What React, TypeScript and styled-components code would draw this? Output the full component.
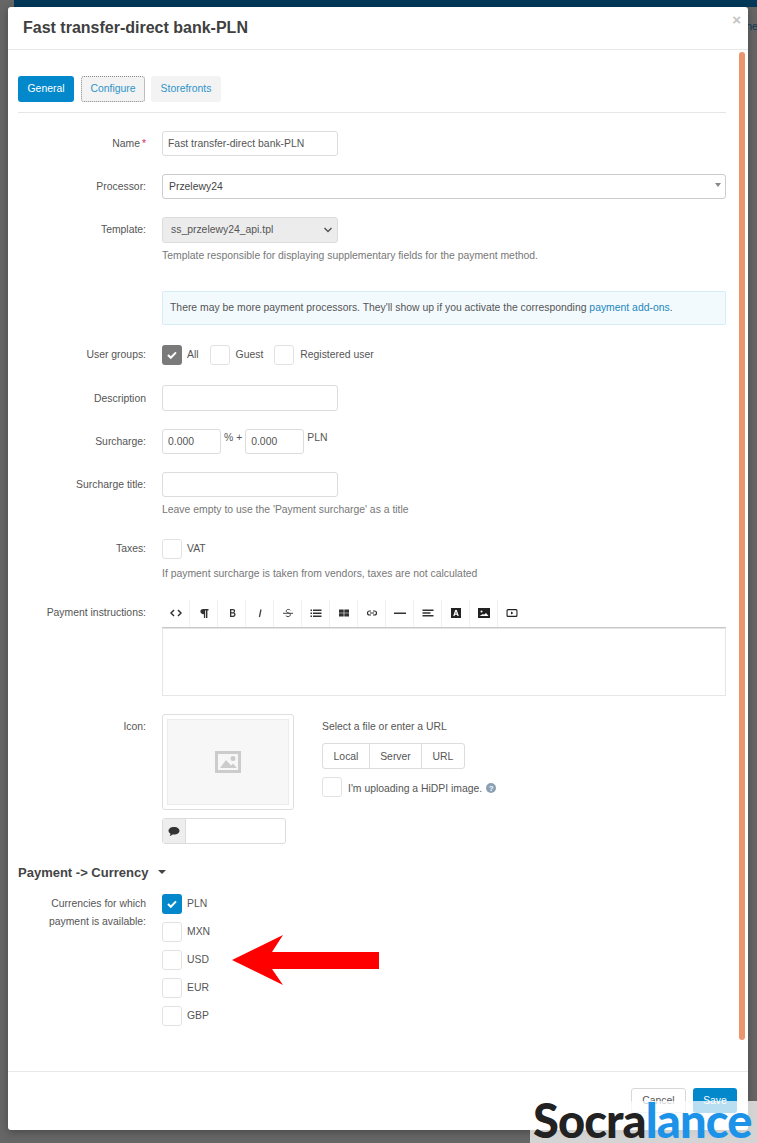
import React from 'react';
import styled, { createGlobalStyle } from 'styled-components';

const GlobalStyle = createGlobalStyle`
    html, body {
        margin: 0;
        padding: 0;
        background: #666;
    }
    body {
        font-family: 'Liberation Sans', Arial, sans-serif;
        font-size: 10.4px;
        color: #555;
        overflow: hidden;
    }
`;

const Page = styled.div`
    position: relative;
    width: 757px;
    height: 1143px;
    overflow: hidden;
    padding: 7px 9px 13px 8px;
    box-sizing: border-box;
    background: #666;
`;

const TopBar = styled.div`
    position: absolute;
    top: 0;
    left: 14px;
    right: 0;
    height: 7px;
    background: #03385a;
`;

const BehindText = styled.span`
    position: absolute;
    top: 20px;
    left: 746px;
    font-size: 11px;
    color: #0c3a58;
`;

const Modal = styled.div`
    position: relative;
    display: flex;
    flex-direction: column;
    height: 100%;
    background: #fff;
    border-radius: 3px;
    box-shadow: 0 2px 8px rgba(0, 0, 0, 0.3);
`;

const Header = styled.div`
    display: flex;
    align-items: center;
    height: 42px;
    padding-left: 15px;
    border-bottom: 1px solid #e8e8e8;
    flex-shrink: 0;
`;

const Title = styled.h3`
    margin: 0;
    font-size: 16px;
    font-weight: bold;
    color: #404040;
`;

const Close = styled.span`
    position: absolute;
    top: 4px;
    right: 7px;
    font-size: 15px;
    font-weight: bold;
    color: #c4c4c4;
`;

const ScrollThumb = styled.div`
    position: absolute;
    top: 45px;
    right: 3px;
    width: 6px;
    height: 988px;
    border-radius: 3px;
    background: #ea956c;
`;

const Body = styled.div`
    flex: 1;
    padding: 26px 22px 0 10px;
`;

const Tabs = styled.div`
    display: flex;
    align-items: center;
    padding-bottom: 10px;
    margin-bottom: 18px;
    border-bottom: 1px solid #e6e6e6;
`;

const Tab = styled.div<{ $active?: boolean; $focused?: boolean; $width: number; $gap: number }>`
    display: flex;
    align-items: center;
    justify-content: center;
    box-sizing: border-box;
    width: ${p => p.$width}px;
    height: 26px;
    padding-bottom: 1px;
    margin-right: ${p => p.$gap}px;
    border-radius: 3px;
    background: ${p => (p.$active ? '#0388cc' : '#f3f3f3')};
    color: ${p => (p.$active ? '#fff' : '#2e93c9')};
    border: ${p => (p.$focused ? '1px dotted #888' : 'none')};
`;

const Row = styled.div<{ $gap?: number }>`
    display: grid;
    grid-template-columns: 128px 1fr;
    column-gap: 16px;
    margin-bottom: ${p => p.$gap ?? 18}px;
`;

const Label = styled.div<{ $pad?: number }>`
    text-align: right;
    line-height: 18px;
    padding-top: ${p => p.$pad ?? 4}px;
    color: #555;
`;

const Required = styled.span`
    color: #e0245e;
    margin-left: 2px;
`;

const Field = styled.div`
    display: flex;
    flex-direction: column;
    align-items: flex-start;
    min-width: 0;
`;

const Input = styled.div<{ $width?: number; $tall?: boolean }>`
    box-sizing: border-box;
    display: flex;
    align-items: center;
    width: ${p => p.$width ?? 176}px;
    height: ${p => (p.$tall ? 26 : 25)}px;
    padding: 0 5px;
    background: #fff;
    border: 1px solid #dcdcdc;
    border-radius: 3px;
    color: #555;
`;

const SelectBox = styled.div`
    position: relative;
    box-sizing: border-box;
    display: flex;
    align-items: center;
    width: 100%;
    height: 25px;
    padding: 0 6px;
    border: 1px solid #ccc;
    border-radius: 3px;
    color: #444;
`;

const Caret = styled.span`
    position: absolute;
    right: 4px;
    top: 8px;
    border-left: 3px solid transparent;
    border-right: 3px solid transparent;
    border-top: 4px solid #888;
`;

const NativeSelect = styled.div`
    box-sizing: border-box;
    display: flex;
    align-items: center;
    justify-content: space-between;
    width: 176px;
    height: 26px;
    padding: 0 4px 1px 8px;
    background: #ececec;
    border: 1px solid #dcdcdc;
    border-radius: 3px;
    color: #555;
`;

const Help = styled.div<{ $top: number }>`
    margin-top: ${p => p.$top}px;
    line-height: 12px;
    color: #777;
`;

const Notice = styled.div`
    box-sizing: border-box;
    display: flex;
    align-items: center;
    height: 34px;
    width: 100%;
    padding: 0 7px 1px;
    background: #f3fafd;
    border: 1px solid #d5edf6;
    border-radius: 2px;
    color: #555;
`;

const Link = styled.span`
    color: #1b87bd;
`;

const InlineChecks = styled.div`
    display: flex;
    align-items: center;
`;

const Check = styled.label<{ $gap?: number }>`
    display: flex;
    align-items: center;
    margin-right: ${p => p.$gap ?? 0}px;
    color: #555;
`;

const CheckText = styled.span<{ $shift?: number }>`
    position: relative;
    top: ${p => p.$shift ?? -1}px;
`;

const Box = styled.span<{ $on?: 'blue' | 'grey'; $space?: number }>`
    box-sizing: border-box;
    display: flex;
    align-items: center;
    justify-content: center;
    width: 20px;
    height: 20px;
    margin-right: ${p => p.$space ?? 5}px;
    border-radius: 3px;
    background: ${p => (p.$on === 'blue' ? '#0388cc' : p.$on === 'grey' ? '#7a7a7a' : '#fff')};
    border: ${p => (p.$on ? 'none' : '1px solid #e2e2e2')};
`;

const Surcharge = styled.div`
    display: flex;
    align-items: flex-start;
    color: #555;
`;

const Unit = styled.span`
    padding: 2px 0 0 3px;
    margin-right: 3px;
    line-height: 14px;
`;

const Toolbar = styled.div`
    display: flex;
    width: 100%;
    height: 27px;
    border-bottom: 1px solid #c9c9c9;
    box-shadow: 0 1px 0 #e4e4e4;
`;

const ToolButton = styled.div`
    box-sizing: border-box;
    display: flex;
    align-items: center;
    justify-content: center;
    width: 28px;
    padding-bottom: 1px;
    color: #333;
    &:not(:last-child) {
        border-right: 1px solid #f1f1f1;
    }
`;

const Editor = styled.div`
    box-sizing: border-box;
    width: 100%;
    height: 67px;
    margin-top: 1px;
    border: 1px solid #e6e6e6;
    border-top: none;
`;

const IconColumns = styled.div`
    display: flex;
    align-items: flex-start;
`;

const ThumbColumn = styled.div`
    width: 160px;
`;

const Thumb = styled.div`
    box-sizing: border-box;
    width: 132px;
    height: 96px;
    padding: 4px;
    border: 1px solid #dedede;
    border-radius: 3px;
`;

const ThumbInner = styled.div`
    display: flex;
    align-items: center;
    justify-content: center;
    height: 100%;
    background: #f7f7f7;
    border: 1px solid #ececec;
    box-sizing: border-box;
`;

const AltField = styled.div`
    box-sizing: border-box;
    display: flex;
    width: 124px;
    height: 26px;
    margin-top: 8px;
    border: 1px solid #dcdcdc;
    border-radius: 3px;
`;

const AltAddon = styled.div`
    display: flex;
    align-items: center;
    justify-content: center;
    width: 22px;
    background: #eee;
    border-right: 1px solid #dcdcdc;
`;

const UploadColumn = styled.div`
    display: flex;
    flex-direction: column;
    align-items: flex-start;
    padding-top: 6px;
`;

const UploadTitle = styled.div`
    line-height: 14px;
    color: #555;
`;

const SourceGroup = styled.div`
    display: flex;
    height: 26px;
    margin: 9px 0 8px;
    box-sizing: border-box;
    border: 1px solid #dcdcdc;
    border-radius: 3px;
`;

const SourceButton = styled.div<{ $width: number }>`
    display: flex;
    align-items: center;
    justify-content: center;
    width: ${p => p.$width}px;
    color: #555;
    & + & {
        border-left: 1px solid #dcdcdc;
    }
`;

const HelpDot = styled.span`
    display: inline-flex;
    align-items: center;
    justify-content: center;
    position: relative;
    top: 1px;
    width: 10px;
    height: 10px;
    margin-left: 4px;
    border-radius: 50%;
    background: #8aa0b4;
    color: #fff;
    font-size: 8px;
    font-weight: bold;
`;

const SectionTitle = styled.div`
    display: flex;
    align-items: center;
    height: 16px;
    margin: 20px 0 14px;
    font-size: 13px;
    font-weight: bold;
    color: #444;
`;

const SectionCaret = styled.span`
    margin-left: 10px;
    border-left: 4px solid transparent;
    border-right: 4px solid transparent;
    border-top: 4px solid #444;
`;

const CurrencyList = styled.div`
    display: flex;
    flex-direction: column;
    gap: 8px;
`;

const Arrow = styled.svg`
    position: absolute;
    left: 224px;
    top: 928px;
`;

const Footer = styled.div`
    display: flex;
    justify-content: flex-end;
    gap: 7px;
    height: 59px;
    padding: 16px 11px 0 0;
    box-sizing: border-box;
    border-top: 1px solid #e8e8e8;
    flex-shrink: 0;
`;

const FooterButton = styled.div<{ $primary?: boolean; $width: number }>`
    box-sizing: border-box;
    display: flex;
    align-items: center;
    justify-content: center;
    width: ${p => p.$width}px;
    height: 25px;
    border-radius: 3px;
    background: ${p => (p.$primary ? '#0388cc' : '#fff')};
    color: ${p => (p.$primary ? '#fff' : '#555')};
    border: ${p => (p.$primary ? 'none' : '1px solid #d8d8d8')};
`;

const Watermark = styled.div`
    position: absolute;
    left: 530px;
    top: 1101px;
    width: 227px;
    height: 42px;
    padding-left: 3px;
    box-sizing: border-box;
    background: rgba(255, 255, 255, 0.72);
    font-family: Lato, 'Noto Sans', sans-serif;
    font-size: 47px;
    font-weight: 900;
    line-height: 39px;
    letter-spacing: -0.9px;
    white-space: nowrap;
    color: #222;
`;

const WatermarkAccent = styled.span`
    color: #1c93e8;
`;

const CheckMark = () => (
    <svg width="10" height="8" viewBox="0 0 10 8">
        <path d="M1 4l2.8 2.8L9 1.4" fill="none" stroke="#fff" strokeWidth="2" />
    </svg>
);

const toolIcons: React.ReactNode[] = [
    <path key="code" d="M4 3L1 6l3 3M8 3l3 3-3 3" fill="none" stroke="#333" strokeWidth="1.5" />,
    <path key="para" d="M5 2h5.5v1.4H9.4V11H8V3.4H7.2V11H5.9V7.2C3.4 7.2 2.4 6 2.4 4.6S3.4 2 5 2z" fill="#333" />,
    <path key="bold" d="M4 2h3c1.400 0 2.100.7 2.100 1.900 0 .8-.4 1.300-1 1.600.9.2 1.400.9 1.400 1.800C9.500 9 8.600 10 7.200 10H4zm1.300 1.200v2h1.500c.6 0 1-.4 1-1s-.4-1-1-1zm0 3.200v2.400h1.700c.8 0 1.200-.5 1.200-1.200s-.4-1.200-1.200-1.200z" fill="#333" />,
    <path key="italic" d="M7 2.500L5.400 10" fill="none" stroke="#444" strokeWidth="1.300" />,
    <path key="strike" d="M8.300 3.300C7.900 2.700 7.200 2.400 6.300 2.400 5.100 2.400 4.300 3 4.300 4s.7 1.400 2 1.800c1.300.4 2 1 2 2s-.9 1.800-2.200 1.800c-1 0-1.800-.4-2.300-1M1 6.300h10" fill="none" stroke="#444" strokeWidth="1" />,
    <path key="list" d="M.5 2.500h1.500V4H.5zM.5 5.500h1.500V7H.5zM.5 8.500h1.500V10H.5zM3 2.500h8.500V4H3zM3 5.500h8.500V7H3zM3 8.500h8.500V10H3z" fill="#333" />,
    <path key="table" d="M1 2.500h4.700V5.700H1zM6.300 2.500H11V5.700H6.300zM1 6.300h4.700V9.500H1zM6.300 6.300H11V9.500H6.300z" fill="#333" />,
    <path key="link" d="M5 4H3.500a2 2 0 000 4H5M7 4h1.500a2 2 0 010 4H7M4 6h4" fill="none" stroke="#333" strokeWidth="1.200" />,
    <path key="rule" d="M0 5.500h12V7H0z" fill="#333" />,
    <path key="align" d="M.5 2.500h11V4H.5zM.5 5.300h8v1.400H.5zM.5 8h11v1.500H.5z" fill="#333" />,
    <path key="colour" fillRule="evenodd" d="M1 1h10v10H1zM5.200 3L3.200 9h1.300l.4-1.300h2.200L7.500 9h1.300L6.800 3zM5.300 6.600L6 4.500l.7 2.100z" fill="#222" />,
    <path key="image" fillRule="evenodd" d="M0 1h12v10H0zM3.500 3.500a1 1 0 100 2 1 1 0 000-2zM1.500 9h9L8 6 6 7.800 5 7z" fill="#222" />,
    <path key="video" fillRule="evenodd" d="M2 2h8A1.500 1.500 0 0111.500 3.500v5A1.500 1.500 0 0110 10H2A1.500 1.500 0 01.500 8.500v-5A1.500 1.500 0 012 2zm0 1.300a.4.4 0 00-.4.4v4.600c0 .2.200.4.400.4h8a.4.4 0 00.4-.4V3.700a.4.4 0 00-.4-.4zM5 4.500L7.500 6 5 7.500z" fill="#222" />,
];

const currencies = ['PLN', 'MXN', 'USD', 'EUR', 'GBP'];

const App = () => (
    <Page>
        <GlobalStyle />
        <TopBar />
        <BehindText>ne</BehindText>
        <Modal>
            <Header>
                <Title>Fast transfer-direct bank-PLN</Title>
            </Header>
            <Close>×</Close>
            <ScrollThumb />
            <Body>
                <Tabs>
                    <Tab $active $width={56} $gap={7}>General</Tab>
                    <Tab $focused $width={64} $gap={6}>Configure</Tab>
                    <Tab $width={70} $gap={0}>Storefronts</Tab>
                </Tabs>

                <Row>
                    <Label>Name<Required>*</Required></Label>
                    <Field><Input>Fast transfer-direct bank-PLN</Input></Field>
                </Row>
                <Row>
                    <Label>Processor:</Label>
                    <Field>
                        <SelectBox>Przelewy24<Caret /></SelectBox>
                    </Field>
                </Row>
                <Row $gap={29}>
                    <Label>Template:</Label>
                    <Field>
                        <NativeSelect>
                            ss_przelewy24_api.tpl
                            <svg width="10" height="6" viewBox="0 0 10 6">
                                <path d="M1.500 1l3.500 3.500L8.500 1" fill="none" stroke="#555" strokeWidth="1.500" />
                            </svg>
                        </NativeSelect>
                        <Help $top={7}>Template responsible for displaying supplementary fields for the payment method.</Help>
                    </Field>
                </Row>
                <Row $gap={20}>
                    <div />
                    <Notice>
                        <span>
                            There may be more payment processors. They'll show up if you activate the corresponding{' '}
                            <Link>payment add-ons</Link>.
                        </span>
                    </Notice>
                </Row>
                <Row $gap={20}>
                    <Label $pad={1}>User groups:</Label>
                    <InlineChecks>
                        <Check $gap={11}><Box $on="grey"><CheckMark /></Box><CheckText>All</CheckText></Check>
                        <Check $gap={11}><Box $space={6} /><CheckText>Guest</CheckText></Check>
                        <Check><Box $space={6} /><CheckText>Registered user</CheckText></Check>
                    </InlineChecks>
                </Row>
                <Row>
                    <Label $pad={5}>Description</Label>
                    <Field><Input $tall /></Field>
                </Row>
                <Row>
                    <Label>Surcharge:</Label>
                    <Surcharge>
                        <Input $width={59}>0.000</Input>
                        <Unit>% +</Unit>
                        <Input $width={59}>0.000</Input>
                        <Unit>PLN</Unit>
                    </Surcharge>
                </Row>
                <Row $gap={23}>
                    <Label>Surcharge title:</Label>
                    <Field>
                        <Input />
                        <Help $top={7}>Leave empty to use the 'Payment surcharge' as a title</Help>
                    </Field>
                </Row>
                <Row $gap={20}>
                    <Label $pad={1}>Taxes:</Label>
                    <Field>
                        <Check><Box /><CheckText>VAT</CheckText></Check>
                        <Help $top={9}>If payment surcharge is taken from vendors, taxes are not calculated</Help>
                    </Field>
                </Row>
                <Row>
                    <Label>Payment instructions:</Label>
                    <Field>
                        <Toolbar>
                            {toolIcons.map((icon, i) => (
                                <ToolButton key={i}>
                                    <svg width="12" height="12" viewBox="0 0 12 12">{icon}</svg>
                                </ToolButton>
                            ))}
                        </Toolbar>
                        <Editor />
                    </Field>
                </Row>
                <Row $gap={0}>
                    <Label>Icon:</Label>
                    <IconColumns>
                        <ThumbColumn>
                            <Thumb>
                                <ThumbInner>
                                    <svg width="26" height="22" viewBox="0 0 26 22">
                                        <path fillRule="evenodd" d="M0 0h26v22H0zM3 3v16h20V3zM18 5a2.500 2.500 0 110 5 2.500 2.500 0 010-5zM5 17l6-8 5 5.500 2-2 4 4.500z" fill="#ccc" />
                                    </svg>
                                </ThumbInner>
                            </Thumb>
                            <AltField>
                                <AltAddon>
                                    <svg width="12" height="11" viewBox="0 0 12 11">
                                        <path d="M6 1c3 0 5.500 1.600 5.500 3.800S9 8.600 6 8.600c-.5 0-1 0-1.400-.1C3.700 9.300 2.500 9.800 1.500 10c.5-.7.900-1.500 1-2.300C1.300 7 .5 6 .5 4.800.5 2.600 3 1 6 1z" fill="#333" />
                                    </svg>
                                </AltAddon>
                            </AltField>
                        </ThumbColumn>
                        <UploadColumn>
                            <UploadTitle>Select a file or enter a URL</UploadTitle>
                            <SourceGroup>
                                <SourceButton $width={46}>Local</SourceButton>
                                <SourceButton $width={51}>Server</SourceButton>
                                <SourceButton $width={42}>URL</SourceButton>
                            </SourceGroup>
                            <Check><Box $space={6} /><CheckText $shift={1}>I'm uploading a HiDPI image.</CheckText><HelpDot>?</HelpDot></Check>
                        </UploadColumn>
                    </IconColumns>
                </Row>

                <SectionTitle>Payment -&gt; Currency<SectionCaret /></SectionTitle>

                <Row $gap={0}>
                    <Label $pad={1}>Currencies for which payment is available:</Label>
                    <CurrencyList>
                        {currencies.map((code, i) => (
                            <Check key={code}>
                                <Box $on={i === 0 ? 'blue' : undefined}>{i === 0 && <CheckMark />}</Box>
                                <CheckText>{code}</CheckText>
                            </Check>
                        ))}
                    </CurrencyList>
                </Row>
            </Body>
            <Footer>
                <FooterButton $width={55}>Cancel</FooterButton>
                <FooterButton $primary $width={44}>Save</FooterButton>
            </Footer>
        </Modal>
        <Arrow width="156" height="64" viewBox="0 0 156 64">
            <path d="M8 32L59 7 48 24h107v17H48l11 16z" fill="#fe0000" />
        </Arrow>
        <Watermark>
            Socra<WatermarkAccent>lance</WatermarkAccent>
        </Watermark>
    </Page>
);

export default App;
